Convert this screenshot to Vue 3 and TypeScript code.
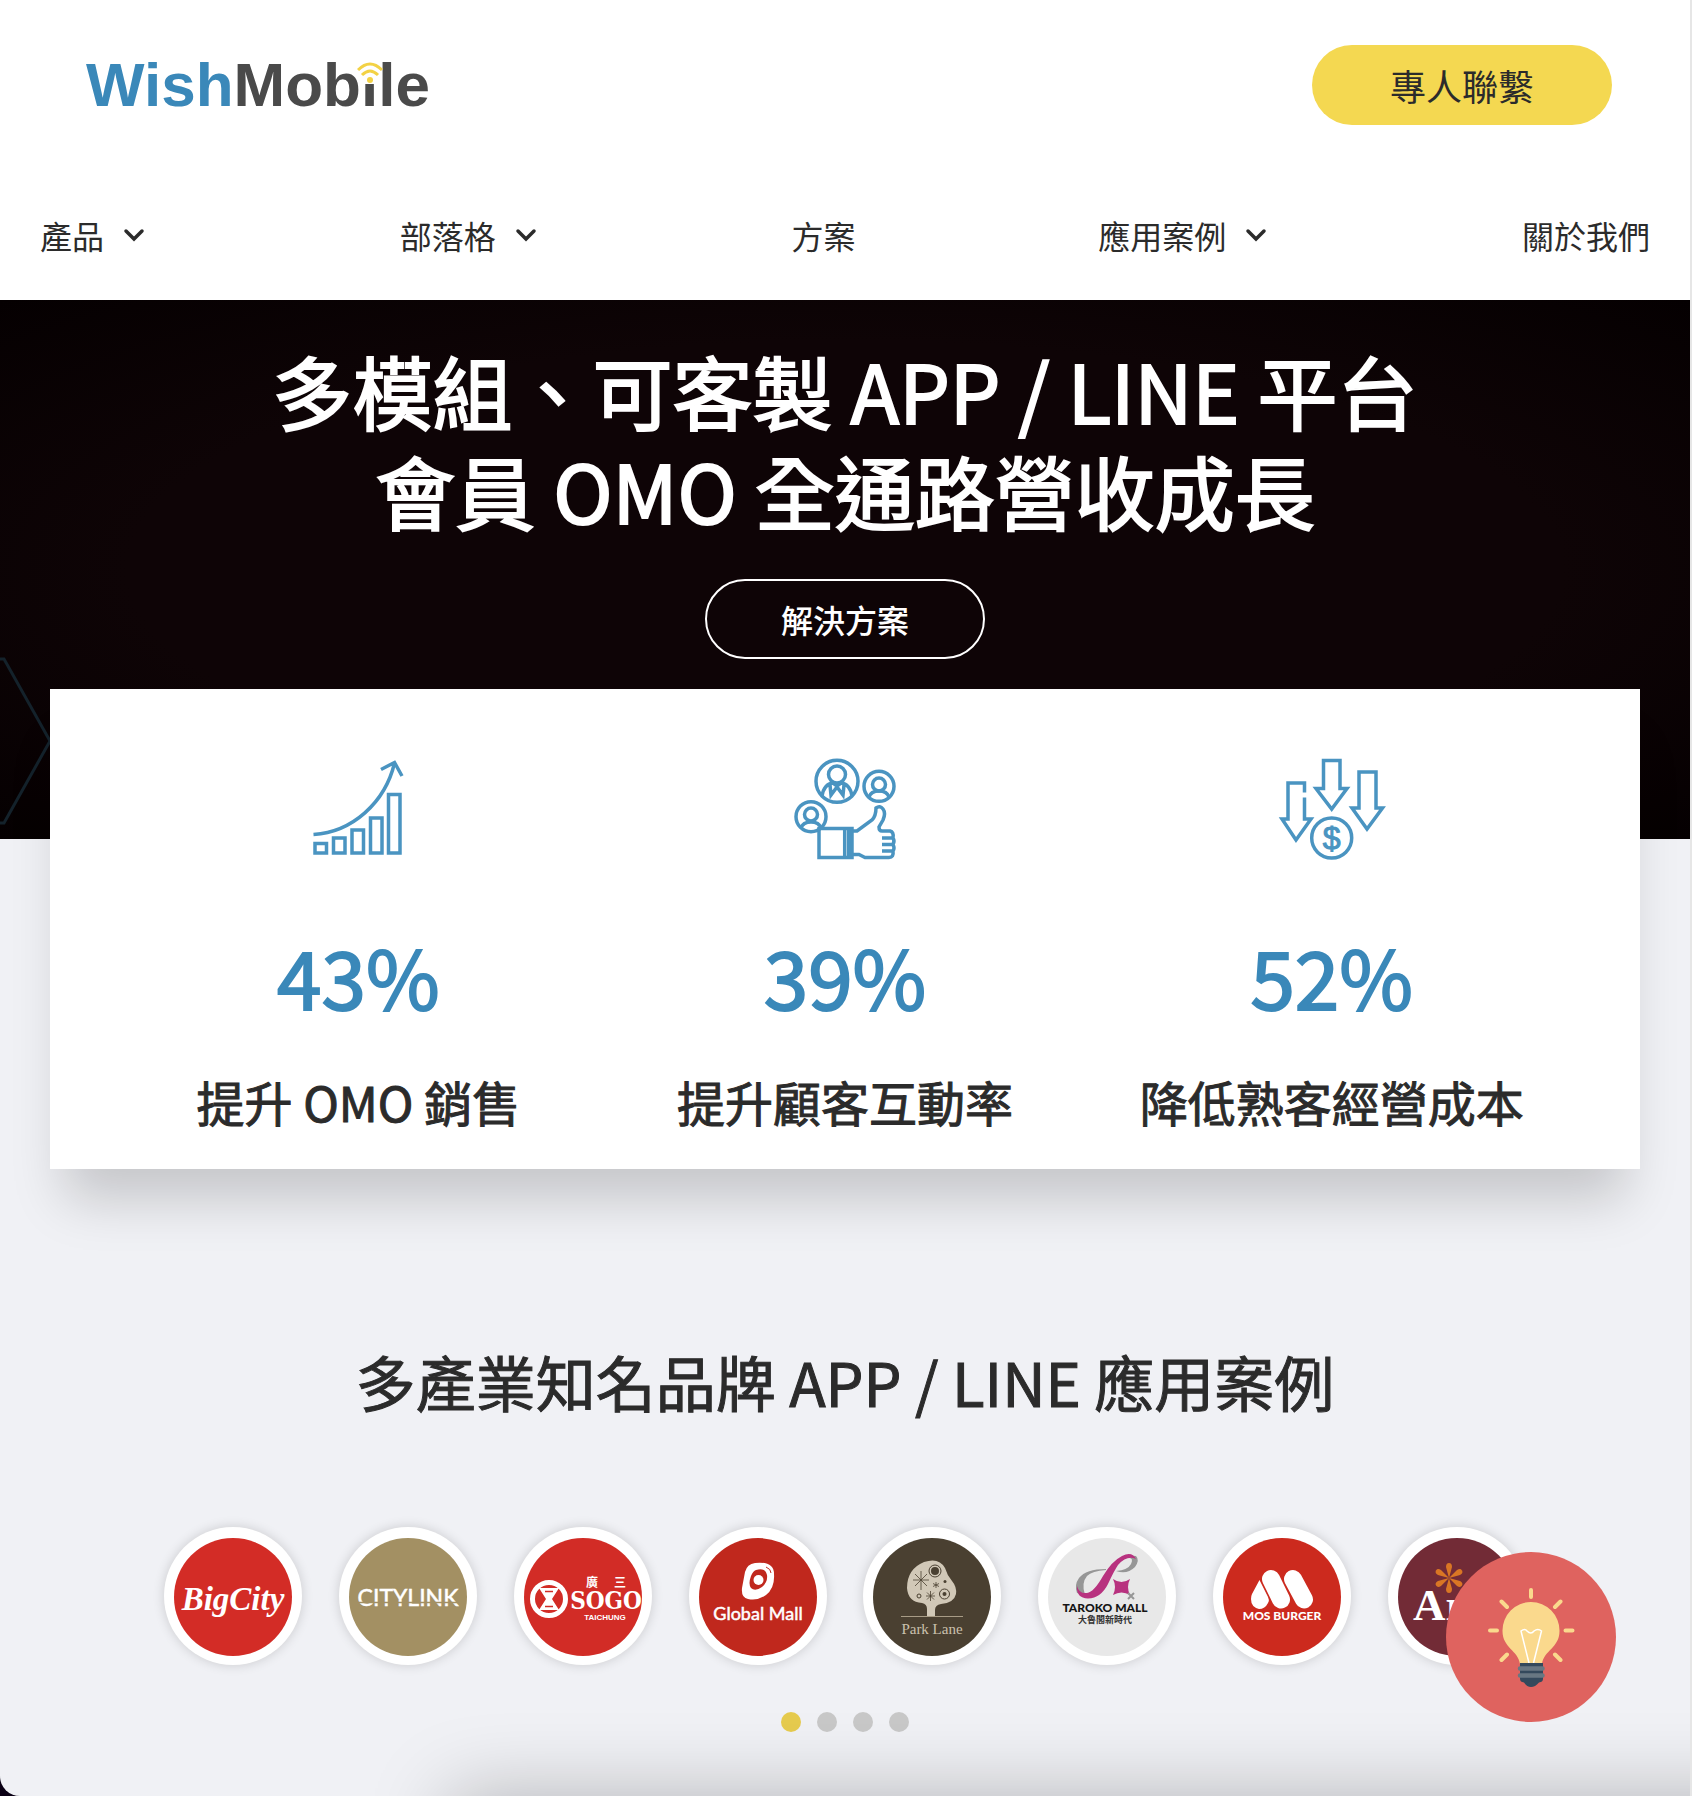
<script setup lang="ts">
import { ref } from 'vue'

interface NavItem {
  label: string
  menu: boolean
}

const navItems: NavItem[] = [
  { label: '產品', menu: true },
  { label: '部落格', menu: true },
  { label: '方案', menu: false },
  { label: '應用案例', menu: true },
  { label: '關於我們', menu: false },
]

const slideCount = 4
const activeSlide = ref<number>(1)
</script>

<template>
  <div class="window">
    <div class="page">
      <header>
        <div class="topbar">
          <a class="logo" href="#"><span class="wish">Wish</span>Mob<span class="signal">i<svg viewBox="0 0 26 22" width="26" height="22" aria-hidden="true">
            <rect x="4" y="0" width="18" height="22" fill="#fff" />
            <g fill="none" stroke="#f3d245" stroke-width="3">
              <path d="M1 8 Q13 -4 25 8" />
              <path d="M5 13 Q13 5 21 13" />
            </g>
            <circle cx="13" cy="18" r="3" fill="#f3d245" />
          </svg></span>le</a>
          <button class="contact" type="button">專人聯繫</button>
        </div>
        <nav>
          <a v-for="item in navItems" :key="item.label" href="#">
            {{ item.label }}
            <svg v-if="item.menu" viewBox="0 0 22 14" width="22" height="14" aria-hidden="true">
              <path d="M3 3 L11 11 L19 3" fill="none" stroke="#2b2b2b" stroke-width="3.500" stroke-linecap="round" />
            </svg>
          </a>
        </nav>
      </header>

      <section class="hero">
        <svg class="hexagon" viewBox="0 0 52 168" width="52" height="168" aria-hidden="true">
          <path d="M0 2 H4 L50 84 L4 166 H0" fill="none" stroke="#14222b" stroke-width="3" />
        </svg>
        <h1>多模組、可客製 APP / LINE 平台<br />會員 OMO 全通路營收成長</h1>
        <button class="solution" type="button">解決方案</button>
      </section>

      <section class="stats">
        <div class="stat">
          <svg class="line-icon" viewBox="0 0 100 100" width="100" height="100" aria-hidden="true">
            <path d="M7 84.500h11.500v9.500H7z M25.500 79H37v15H25.500z M44 71h11.500v23H44z M62.500 59H74v35H62.500z M80.500 35.500H92V94H80.500z" />
            <path d="M5.500 75.500 C44 73 77 44 86.500 4 M73 10.500 L86.500 3.500 L94 17" />
          </svg>
          <strong>43%</strong>
          <h2>提升 OMO 銷售</h2>
        </div>
        <div class="stat">
          <svg class="line-icon" viewBox="0 0 100 100" width="100" height="100" aria-hidden="true">
            <circle cx="42" cy="22.300" r="21" />
            <circle cx="42" cy="15.500" r="8.500" />
            <path d="M27 37 Q29 25 38 24 L42 27 L46 24 Q55 25 57 37 M35 26 L36 36 L42 28 L48 36 L49 26" />
            <circle cx="84" cy="27.300" r="15" />
            <circle cx="84" cy="25.500" r="6.500" />
            <path d="M74 38 Q76 32 84 32 T94 38" />
            <circle cx="16" cy="57.700" r="15" />
            <circle cx="16" cy="55.500" r="6.500" />
            <path d="M6 69 Q8 63 16 63 T26 69" />
            <path d="M24 69.500 H57 V98.500 H24 z M49.700 70 V98 M53.700 70 V98" />
            <path d="M57 72 H62 L77 61 Q81 57 81 49 Q85 46 88 50 Q91 54 88 61 L84 68 Q84 72 87 72 H95 Q99 73 98 79 H87 M98 79 Q100 82 98 85.500 H87 M98 85.500 Q100 89 98 92 H87 M98 92 Q99 98.500 94 98.500 H70 L64 95.500 H57" />
          </svg>
          <strong>39%</strong>
          <h2>提升顧客互動率</h2>
        </div>
        <div class="stat">
          <svg class="line-icon" viewBox="1 0 100 100" width="100" height="100" aria-hidden="true">
            <path d="M42.500 1.500 H59 V29.500 H66 L50.700 50 L35 29.500 H42.500 z" />
            <path d="M78 13 H95 V49 H101.500 L86 70 L71 49 H78 z" />
            <path d="M23.500 33.500 V24 H7 V60 H1 L15 81 L30 60 H23.500 V38.500" />
            <circle cx="50.700" cy="79" r="20" />
            <text x="50.700" y="90" text-anchor="middle">$</text>
          </svg>
          <strong>52%</strong>
          <h2>降低熟客經營成本</h2>
        </div>
      </section>

      <section class="brands">
        <h2>多產業知名品牌 APP / LINE 應用案例</h2>
        <ul>
          <li>
            <svg viewBox="0 0 118 118" role="img">
              <circle cx="59" cy="59" r="59" fill="#d32c26" />
              <text class="script" x="59" y="72" font-size="33">BigCity</text>
            </svg>
          </li>
          <li>
            <svg viewBox="0 0 118 118" role="img">
              <circle cx="59" cy="59" r="59" fill="#a39063" />
              <text class="lato outlined" x="59" y="68" font-size="23">CITYLINK</text>
              <path d="M6 64.500 H112" stroke="#a39063" stroke-width="1.500" />
            </svg>
          </li>
          <li>
            <svg viewBox="0 0 118 118" role="img">
              <circle cx="59" cy="59" r="59" fill="#d22c26" />
              <circle cx="25" cy="61" r="16.500" fill="none" stroke="#fff" stroke-width="5" />
              <path d="M15 50 H35 L28 61 L35 72 H15 L22 61 z" fill="#fff" />
              <path d="M21 53.500 H29 M21 68.500 H29" stroke="#d22c26" stroke-width="1.500" />
              <text class="cjk" x="68" y="49" font-size="12">廣</text>
              <text class="cjk" x="96" y="49" font-size="12">三</text>
              <text class="slab" x="82" y="71" font-size="24">SOGO</text>
              <text class="sans" x="81" y="82" font-size="8">TAICHUNG</text>
            </svg>
          </li>
          <li>
            <svg viewBox="0 0 118 118" role="img">
              <circle cx="59" cy="59" r="59" fill="#c0281d" />
              <path fill="#fff" fill-rule="evenodd" d="M56 25 Q75 23 75 36 Q76 50 67 57 Q59 63 49 61 Q42 60 43 50 L46 34 Q48 26 56 25 z M57 32 Q66 29 68 37 Q69 44 63 49 Q56 54 52 50 Q49 46 52 38 Q54 33 57 32 z" />
              <circle cx="59.500" cy="42" r="5" fill="#fff" />
              <path d="M67 29 Q72 31 72 35" fill="none" stroke="#c0281d" />
              <text class="lato outlined" x="59" y="82" font-size="18">Global Mall</text>
            </svg>
          </li>
          <li>
            <svg viewBox="0 0 118 118" role="img">
              <circle cx="59" cy="59" r="59" fill="#4a4031" />
              <path fill="#d1c8b7" d="M54 78 V71 Q54 66 49 65 Q35 64 34 50 Q34 31 51 24 Q66 19 72 30 Q74 37 79 43 Q84 49 83 56 Q81 65 68 66 Q62 67 62 72 V78 z" />
              <path d="M28 78.500 H90" stroke="#a89c86" />
              <g fill="none" stroke="#4a4031">
                <circle cx="62" cy="33" r="6" />
                <circle cx="71.500" cy="56" r="5" />
                <circle cx="46" cy="58" r="2" />
                <path d="M48 33 V52 M40 42 H56 M42 36 L54 48 M54 36 L42 48 M57.500 53 V63 M53 58 H62 M54 54.500 L61 61.500 M61 54.500 L54 61.500 M63 44 V50 M60 45.500 L66 48.500 M66 45.500 L60 48.500" stroke-width=".8" />
              </g>
              <g fill="#4a4031">
                <circle cx="62" cy="33" r="4" />
                <circle cx="71.500" cy="56" r="2" />
                <circle cx="72" cy="43.500" r="1.500" />
              </g>
              <text class="serif" x="59" y="96" font-size="15" fill="#cbc1ae">Park Lane</text>
            </svg>
          </li>
          <li>
            <svg viewBox="0 0 118 118" role="img">
              <circle cx="59" cy="59" r="59" fill="#e8e8e8" />
              <path fill="#969696" d="M58 31 Q38 31 31 40 Q26 47 29 55 L37 57 Q33 45 39 38 Q44 33 58 32 z M68 33 Q79 37 87 29 Q92 22 88 18 Q82 17 80 20 Q86 19 83 26 Q80 32 68 33 z" />
              <path fill="#b8327f" d="M29 48 Q28 60 40 60.500 Q53 60 60 46 Q66 33 70 27 Q79 17 88 21 Q84 13 74 18 Q64 23 55 38 Q46 54 39 55 Q31 56 29 48 z" />
              <path fill="#b8327f" d="M65 41 Q73.500 47 82 41 Q78 49 82 57 Q73.500 52 65 57 Q69 49 65 41 z" />
              <path d="M80 55 L86 61 M86 55 L80 61" stroke="#969696" stroke-width="2" />
              <text class="lato heavy" x="57" y="74" font-size="12" fill="#151515">TAROKO MALL</text>
              <text class="cjk" x="57" y="85" font-size="9" fill="#333">大魯閣新時代</text>
            </svg>
          </li>
          <li>
            <svg viewBox="0 0 118 118" role="img">
              <circle cx="59" cy="59" r="59" fill="#cc2a1e" />
              <path fill="#fff" d="M36.500 42 L44 57 Q47 62 45 65 Q42 71 36 71 Q28 69 28 61 Q28 58 29 56 z" />
              <path d="M48 41 L58 61.500 M70 41 L81 61.500" stroke="#fff" stroke-width="18" stroke-linecap="round" />
              <text class="lato heavy" x="59" y="82" font-size="12">MOS BURGER</text>
            </svg>
          </li>
          <li>
            <svg viewBox="0 0 118 118" role="img">
              <circle cx="59" cy="59" r="59" fill="#722b36" />
              <g fill="#d97624">
                <path v-for="angle in [0, 60, 120, 180, 240, 300]" :key="angle" d="M51 40 L48 29 Q48 25 51 25 Q54 25 54 29 z" :transform="`rotate(${angle} 51 40)`" />
              </g>
              <text class="serif heavy start" x="15" y="82" font-size="45">Ar</text>
            </svg>
          </li>
        </ul>
        <div class="dots">
          <button
            v-for="n in slideCount"
            :key="n"
            type="button"
            :class="{ active: n === activeSlide }"
            :aria-label="`${n}`"
            @click="activeSlide = n"
          ></button>
        </div>
      </section>

      <div class="shade"></div>
      <button class="idea" type="button" aria-label="idea">
        <svg viewBox="0 0 170 170" width="170" height="170" aria-hidden="true">
          <path fill="#fad98d" d="M85 50 A28.500 28.500 0 0 1 113.500 79 C113.500 96 98 98 96 112 H74 C72 98 56.500 96 56.500 79 A28.500 28.500 0 0 1 85 50 z" />
          <path d="M85 38 V45 M44 78.500 H51 M119.500 78.500 H126.500 M55.500 49.500 L61 55 M114.500 49.500 L109 55 M55.500 108 L61 102.500 M114.500 108 L109 102.500" stroke="#fad98d" stroke-width="4" stroke-linecap="round" />
          <path d="M83 111 L75 79 Q79 76 81 79 Q85 83 88 79 Q92 76 95.500 79 L87.500 111" fill="none" stroke="#fff" stroke-width="1.500" />
          <path fill="#34495c" d="M74 111 H97 V127 Q97 130 93 130.500 Q89 135 85 135 Q81 135 78 130.500 Q74 130 74 127 z" />
          <path d="M74 116.500 H96.500 M74 123.500 H96.500" stroke="#687782" stroke-width="4.500" stroke-linecap="round" />
        </svg>
      </button>
    </div>
  </div>
</template>

<style>
body {
  margin: 0;
  background: #0a0014;
}
</style>

<style scoped>
.window {
  min-height: 100vh;
  display: flex;
  background: #0a0014;
  font-family: "Noto Sans CJK TC", sans-serif;
  font-weight: 400;
  color: #2b2b2b;
}

.page {
  position: relative;
  flex: 1;
  min-width: 0;
  box-sizing: border-box;
  overflow: hidden;
  border-right: 2px solid #e6e6e6;
  border-bottom-left-radius: 20px;
  background: #f0f1f5;
}

h1,
h2,
ul {
  margin: 0;
  padding: 0;
}

button {
  font-family: inherit;
  cursor: pointer;
}

header {
  background: #fff;
}

.topbar {
  display: flex;
  justify-content: space-between;
  align-items: center;
  padding: 45px 78px 45px 86px;
}

.logo {
  font: bold 62px/80px "Liberation Sans", sans-serif;
  color: #4a4a4a;
  text-decoration: none;
}

.wish {
  color: #3a88b9;
}

.signal {
  position: relative;
}

.signal svg {
  position: absolute;
  left: -4px;
  top: 12px;
}

.contact {
  width: 300px;
  height: 80px;
  border: 0;
  border-radius: 40px;
  background: #f4d851;
  color: #2b2b2b;
  font-size: 36px;
}

nav {
  display: flex;
  justify-content: space-between;
  align-items: center;
  height: 130px;
  padding: 0 40px;
}

nav a {
  display: flex;
  align-items: center;
  font-size: 32px;
  color: inherit;
  text-decoration: none;
}

nav svg {
  margin: 0 12px 0 19px;
}

.hero {
  position: relative;
  display: flex;
  flex-direction: column;
  align-items: center;
  padding: 39px 0 180px;
  background: radial-gradient(ellipse at center, #0e0406 60%, #050001 100%);
  color: #fff;
}

.hexagon {
  position: absolute;
  left: 0;
  bottom: 14px;
}

h1 {
  font-size: 80px;
  line-height: 100px;
  font-weight: 400;
  text-align: center;
  -webkit-text-stroke: 2px currentColor;
}

.solution {
  width: 280px;
  height: 80px;
  margin-top: 40px;
  border: 2px solid #fff;
  border-radius: 40px;
  background: transparent;
  color: #fff;
  font-size: 32px;
  font-weight: 500;
}

.stats {
  position: relative;
  display: grid;
  grid-template-columns: repeat(3, 1fr);
  box-sizing: border-box;
  height: 480px;
  margin: -150px 50px 0;
  padding: 70px 65px 0;
  background: #fff;
  box-shadow: 0 45px 50px -15px rgba(0, 0, 0, 0.18);
}

.stat {
  display: flex;
  flex-direction: column;
  align-items: center;
}

.line-icon {
  overflow: visible;
  fill: none;
  stroke: #4a94c1;
  stroke-width: 3.5;
}

.line-icon text {
  font: 32px "Liberation Sans", sans-serif;
  fill: #4a94c1;
  stroke-width: 1;
}

.stat strong {
  margin-top: 56px;
  font-size: 80px;
  line-height: 120px;
  font-weight: 400;
  color: #3a88b9;
  -webkit-text-stroke: 2px currentColor;
}

.stat h2 {
  margin-top: 31px;
  font-size: 48px;
  line-height: 70px;
  font-weight: 400;
  -webkit-text-stroke: 1px currentColor;
}

.brands {
  padding: 167px 146px 64px;
}

.brands h2 {
  font-size: 60px;
  line-height: 90px;
  font-weight: 400;
  text-align: center;
  -webkit-text-stroke: 1px currentColor;
}

.brands ul {
  display: grid;
  grid-template-columns: repeat(8, 1fr);
  justify-items: center;
  margin-top: 101px;
  list-style: none;
}

.brands li {
  box-sizing: border-box;
  width: 138px;
  height: 138px;
  padding: 11px 10px 9px;
  border-radius: 50%;
  background: #fff;
  box-shadow: 0 0 12px rgba(0, 0, 0, 0.16);
}

.brands li svg {
  display: block;
  width: 118px;
  height: 118px;
}

.brands text {
  text-anchor: middle;
}

.brands text:not([fill]) {
  fill: #fff;
}

.brands .start {
  text-anchor: start;
}

.script {
  font-family: "Liberation Serif", serif;
  font-style: italic;
  font-weight: 700;
}

.lato {
  font-family: Lato, sans-serif;
}

.outlined {
  stroke: #fff;
  stroke-width: 0.5;
}

.sans {
  font-family: "Liberation Sans", sans-serif;
  font-weight: 700;
}

.slab {
  font-family: "DejaVu Serif Condensed", "DejaVu Serif", serif;
  font-weight: 700;
}

.serif {
  font-family: "Liberation Serif", serif;
}

.cjk {
  font-weight: 700;
}

.heavy {
  font-weight: 900;
}

.dots {
  display: flex;
  justify-content: center;
  gap: 16px;
  margin-top: 47px;
}

.dots button {
  width: 20px;
  height: 20px;
  padding: 0;
  border: 0;
  border-radius: 50%;
  background: #c8c8c8;
}

.dots .active {
  background: #e6cb4e;
}

.idea {
  position: absolute;
  right: 74px;
  bottom: 74px;
  width: 170px;
  height: 170px;
  padding: 0;
  border: 0;
  border-radius: 50%;
  background: #df635f;
}

.idea svg {
  display: block;
}

.shade {
  position: absolute;
  top: 100%;
  left: 450px;
  right: -200px;
  height: 200px;
  box-shadow: 0 0 80px rgba(0, 0, 0, 0.25);
}
</style>
